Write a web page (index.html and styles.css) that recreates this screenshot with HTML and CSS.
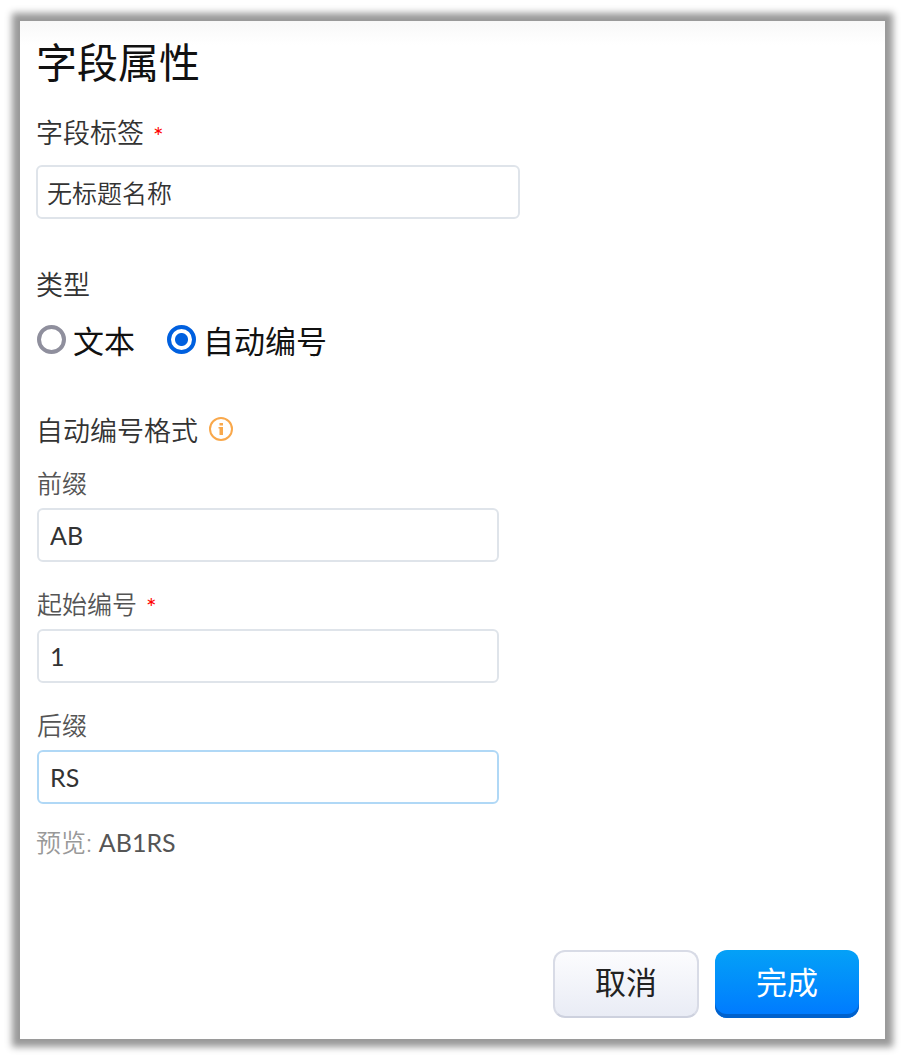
FILE: index.html
```html
<!DOCTYPE html>
<html lang="zh-CN">

<head>
  <meta charset="UTF-8">
  <meta name="viewport" content="width=device-width, initial-scale=1.0">
  <title>字段属性</title>
  <link rel="stylesheet" href="styles.css">
</head>

<body>
  <form class="panel">
    <h1 class="title">字段属性</h1>

    <div class="field">
      <label class="label" for="fieldLabel">字段标签 <span class="required">*</span></label>
      <input class="input input-wide" type="text" id="fieldLabel" value="无标题名称">
    </div>

    <fieldset class="types">
      <legend class="label">类型</legend>
      <div class="radios">
        <label class="radio"><input type="radio" name="type" value="text">文本</label>
        <label class="radio"><input type="radio" name="type" value="auto" checked>自动编号</label>
      </div>
    </fieldset>

    <section class="format">
      <h2 class="label">自动编号格式
        <svg class="info" viewBox="0 0 26 26" aria-hidden="true">
          <circle cx="13" cy="13" r="11" fill="none" stroke="#f9a84b" stroke-width="2"/>
          <path fill="#f9a84b" d="M11.500 7h3.500v2.500h-3.500zM10.500 11h4.500v8h-3.500v-6.500h-1z"/>
        </svg>
      </h2>
      <div class="subfields">
        <div class="subfield">
          <label class="sublabel" for="prefix">前缀</label>
          <input class="input" type="text" id="prefix" value="AB">
        </div>
        <div class="subfield">
          <label class="sublabel" for="start">起始编号 <span class="required">*</span></label>
          <input class="input" type="text" id="start" value="1">
        </div>
        <div class="subfield">
          <label class="sublabel" for="suffix">后缀</label>
          <input class="input active" type="text" id="suffix" value="RS">
        </div>
      </div>
      <p class="preview">预览: <output class="preview-value" for="prefix start suffix">AB1RS</output></p>
    </section>

    <div class="buttons">
      <button class="btn" type="button">取消</button>
      <button class="btn btn-primary" type="button">完成</button>
    </div>
  </form>
</body>
</html>
```
FILE: styles.css
```css
* {
  box-sizing: border-box;
}

body {
  margin: 0;
  padding: 21px 20px;
  min-height: 100vh;
  display: flex;
  background-color: #fff;
  color: #333;
  font-family: Lato, "Noto Sans CJK SC", sans-serif;
}

.panel {
  flex: 1;
  display: flex;
  flex-direction: column;
  padding: 12px 26px 21px 16px;
  background: linear-gradient(#f8f8f8, #fff 24px);
  box-shadow: 0 0 7px 8px #999;
}

.title {
  margin: 0 0 22px;
  font-size: 41px;
  line-height: 60px;
  font-weight: 400;
  color: #111;
}

.label {
  display: flex;
  align-items: center;
  margin: 0;
  padding: 0;
  font-size: 27px;
  line-height: 36px;
  font-weight: 350;
  color: #333;
}

.required {
  margin-left: 9px;
  padding-top: 6px;
  font-size: 25px;
  line-height: 24px;
  font-weight: 400;
  color: #f00;
}

.input {
  display: block;
  width: 100%;
  max-width: 462px;
  height: 54px;
  padding: 0 11px;
  border: 2px solid #dfe4ea;
  border-radius: 6px;
  background-color: #fff;
  font-family: inherit;
  font-size: 25px;
  color: #333;
  outline: none;
}

.input-wide {
  max-width: 484px;
  margin-top: 14px;
  padding: 0 9px;
  font-weight: 350;
}

.active,
.input:focus {
  border-color: #b0d8f6;
}

.types {
  margin: 48px 0 52px;
  padding: 0;
  border: 0;
}

.radios {
  display: flex;
  gap: 32px;
  margin-top: 18px;
  padding-left: 1px;
}

.radio {
  display: flex;
  align-items: center;
  gap: 7px;
  font-size: 31px;
  line-height: 40px;
  color: #111;
}

.radio input {
  appearance: none;
  width: 29px;
  height: 29px;
  margin: 0 0 4px;
  border: 4px solid #8f8f9d;
  border-radius: 50%;
}

.radio input:checked {
  border-color: #0060df;
  background: radial-gradient(circle, #0060df 6px, #fff 7px);
}

.info {
  width: 26px;
  height: 26px;
  margin: 0 0 4px 10px;
}

.subfields {
  display: flex;
  flex-direction: column;
  gap: 26px;
  margin: 18px 0 22px;
  padding-left: 1px;
}

.sublabel {
  display: flex;
  align-items: center;
  margin-bottom: 9px;
  font-size: 25px;
  line-height: 32px;
  font-weight: 350;
  color: #555;
}

.preview {
  margin: 0;
  font-size: 25px;
  line-height: 32px;
  font-weight: 350;
  color: #999;
}

.preview-value {
  font-weight: 400;
  color: #555;
}

.buttons {
  display: flex;
  justify-content: flex-end;
  gap: 16px;
  margin-top: auto;
}

.btn {
  width: 146px;
  height: 68px;
  padding: 0 0 8px;
  border: 2px solid #d8dbe6;
  border-bottom-color: #cdd1de;
  border-radius: 12px;
  background: linear-gradient(#fcfcfe, #e9ecf5);
  font-family: inherit;
  font-size: 31px;
  color: #222;
  cursor: pointer;
}

.btn-primary {
  width: 144px;
  border: 0;
  background: linear-gradient(#04a1f7, #0079ff);
  box-shadow: inset 0 -4px #0061cc;
  color: #fff;
}
```
